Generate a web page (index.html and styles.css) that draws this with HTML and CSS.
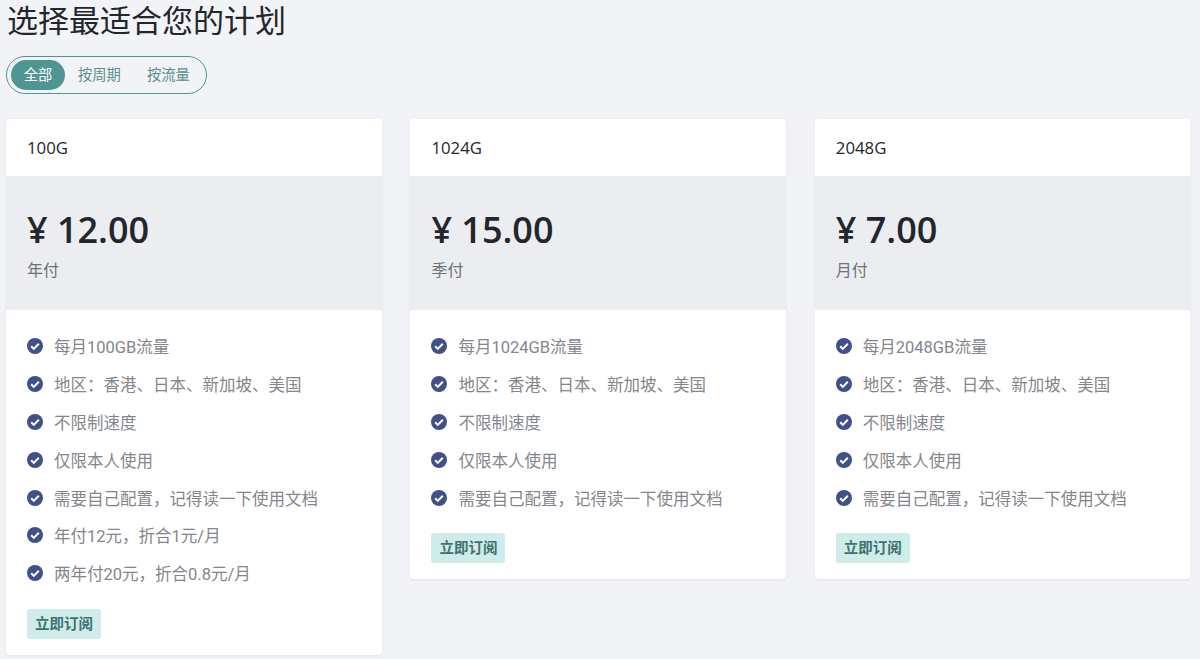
FILE: index.html
```html
<!DOCTYPE html>
<html lang="zh-CN">
<head>
    <meta charset="UTF-8">
    <title>选择最适合您的计划</title>
    <link rel="stylesheet" href="styles.css">
</head>
<body>
    <svg class="defs" width="0" height="0">
        <symbol id="check" viewBox="0 0 16 16">
            <circle cx="8" cy="8" r="8" fill="#3f5188"/>
            <path d="M4.2 8.3l2.6 2.6 5-5.2" fill="none" stroke="#fff" stroke-width="2"/>
        </symbol>
    </svg>

    <h1 class="title">选择最适合您的计划</h1>

    <div class="tabs">
        <span class="tab active">全部</span>
        <span class="tab">按周期</span>
        <span class="tab">按流量</span>
    </div>

    <div class="plans">
        <!-- 100G -->
        <div class="card">
            <div class="card-head">100G</div>
            <div class="card-price">
                <div class="price">¥ 12.00</div>
                <div class="period">年付</div>
            </div>
            <div class="card-body">
                <ul class="features">
                    <li><svg class="icon"><use href="#check"/></svg>每月100GB流量</li>
                    <li><svg class="icon"><use href="#check"/></svg>地区：香港、日本、新加坡、美国</li>
                    <li><svg class="icon"><use href="#check"/></svg>不限制速度</li>
                    <li><svg class="icon"><use href="#check"/></svg>仅限本人使用</li>
                    <li><svg class="icon"><use href="#check"/></svg>需要自己配置，记得读一下使用文档</li>
                    <li><svg class="icon"><use href="#check"/></svg>年付12元，折合1元/月</li>
                    <li><svg class="icon"><use href="#check"/></svg>两年付20元，折合0.8元/月</li>
                </ul>
                <a class="btn">立即订阅</a>
            </div>
        </div>

        <!-- 1024G -->
        <div class="card">
            <div class="card-head">1024G</div>
            <div class="card-price">
                <div class="price">¥ 15.00</div>
                <div class="period">季付</div>
            </div>
            <div class="card-body">
                <ul class="features">
                    <li><svg class="icon"><use href="#check"/></svg>每月1024GB流量</li>
                    <li><svg class="icon"><use href="#check"/></svg>地区：香港、日本、新加坡、美国</li>
                    <li><svg class="icon"><use href="#check"/></svg>不限制速度</li>
                    <li><svg class="icon"><use href="#check"/></svg>仅限本人使用</li>
                    <li><svg class="icon"><use href="#check"/></svg>需要自己配置，记得读一下使用文档</li>
                </ul>
                <a class="btn">立即订阅</a>
            </div>
        </div>

        <!-- 2048G -->
        <div class="card">
            <div class="card-head">2048G</div>
            <div class="card-price">
                <div class="price">¥ 7.00</div>
                <div class="period">月付</div>
            </div>
            <div class="card-body">
                <ul class="features">
                    <li><svg class="icon"><use href="#check"/></svg>每月2048GB流量</li>
                    <li><svg class="icon"><use href="#check"/></svg>地区：香港、日本、新加坡、美国</li>
                    <li><svg class="icon"><use href="#check"/></svg>不限制速度</li>
                    <li><svg class="icon"><use href="#check"/></svg>仅限本人使用</li>
                    <li><svg class="icon"><use href="#check"/></svg>需要自己配置，记得读一下使用文档</li>
                </ul>
                <a class="btn">立即订阅</a>
            </div>
        </div>
    </div>
</body>
</html>
```

FILE: styles.css
```css
* {
    box-sizing: border-box;
}
html, body {
    height: 100%;
}
body {
    margin: 0;
    padding: 0 9px 0 6px;
    background: #f1f3f7;
    color: #23262b;
    font-family: "Open Sans", "Noto Sans CJK SC", sans-serif;
    overflow: hidden;
}
.defs {
    position: absolute;
}
.title {
    margin: 0 0 0 1px;
    height: 56px;
    font-size: 31px;
    font-weight: 400;
    line-height: 41px;
}
.tabs {
    display: inline-flex;
    align-items: center;
    height: 38px;
    padding: 0 3px 0 4px;
    border: 1px solid #4f9593;
    border-radius: 19px;
}
.tab {
    padding: 0 13px;
    font-size: 14.3px;
    line-height: 30px;
    color: #5b8f8d;
}
.tab.active {
    width: 54px;
    padding: 0;
    text-align: center;
    background: #4f9593;
    border-radius: 15px;
    color: #fff;
}
.plans {
    display: grid;
    grid-template-columns: repeat(3, 375.6px);
    gap: 28.8px;
    align-items: start;
    margin-top: 25px;
}
.card {
    background: #fff;
    border-radius: 4px;
    box-shadow: 0 1px 3px rgba(40, 50, 70, 0.08);
    overflow: hidden;
}
.card-head {
    height: 57px;
    padding: 0 21px;
    font-size: 16.8px;
    line-height: 58px;
}
.card-price {
    height: 134px;
    padding: 29px 21px 0;
    background: #ecedf1;
}
.price {
    font-size: 36px;
    font-weight: 600;
    line-height: 50px;
}
.period {
    margin-top: 3px;
    font-size: 16px;
    line-height: 24px;
    color: #6f7278;
}
.card-body {
    padding: 17.5px 21px 16px;
}
.features {
    list-style: none;
    margin: 0 0 17px;
    padding: 0;
}
.features li {
    display: flex;
    align-items: center;
    height: 37.8px;
    font-family: Roboto, "Noto Sans CJK SC", sans-serif;
    font-size: 16.5px;
    color: #83868c;
}
.icon {
    width: 16px;
    height: 16px;
    margin: 0 11px 0 0;
    flex: none;
}
.btn {
    display: inline-block;
    height: 30px;
    padding: 0 8px;
    background: #cdecea;
    border-radius: 3px;
    font-size: 14.5px;
    font-weight: 700;
    line-height: 30px;
    color: #41716f;
}
```
